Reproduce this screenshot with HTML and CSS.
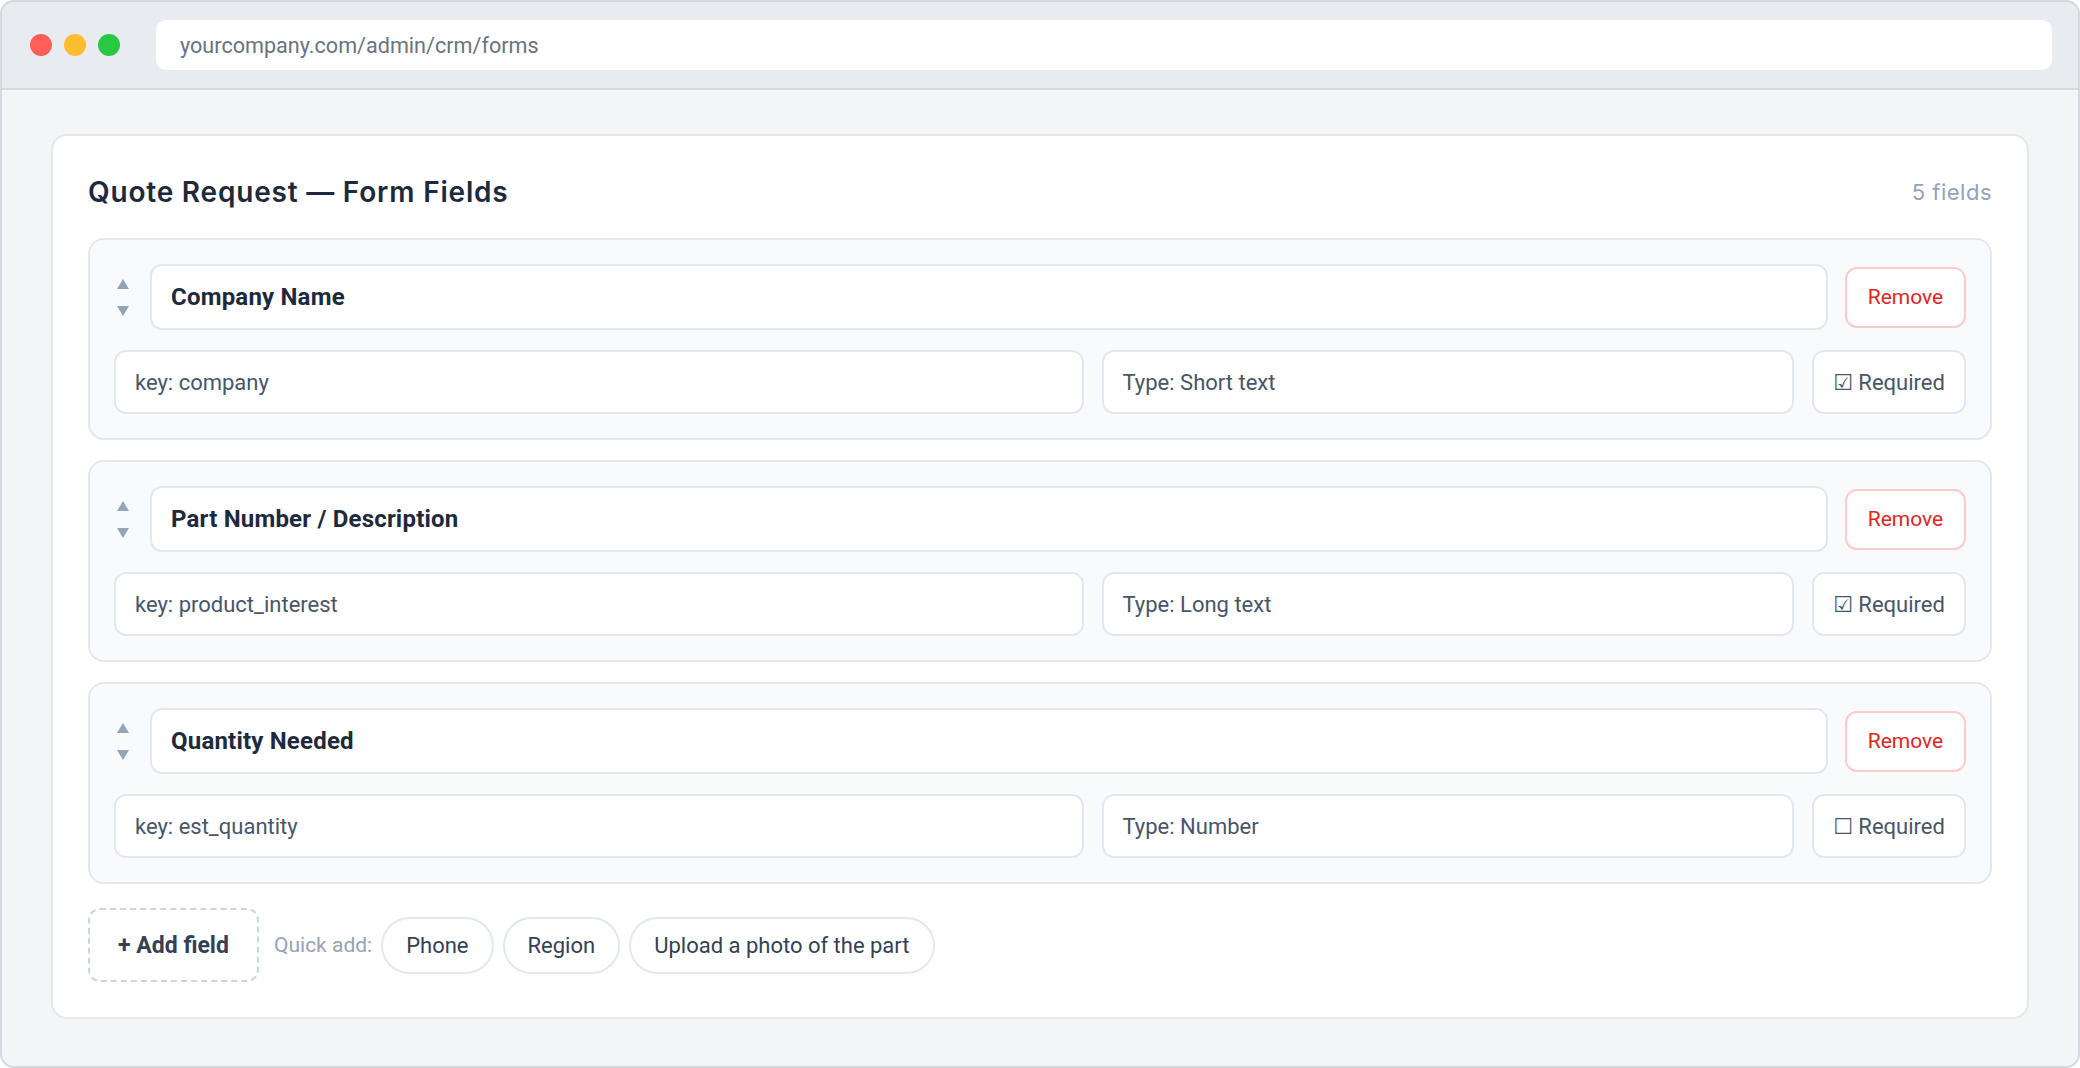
FILE: index.html
```html
<!DOCTYPE html>
<html lang="en">
<head>
  <meta charset="UTF-8">
  <meta name="viewport" content="width=device-width, initial-scale=1.0">
  <title>Quote Request — Form Fields</title>
  <link rel="stylesheet" href="styles.css">
</head>
<body>
  <div class="window">
    <div class="topbar">
      <div class="dots">
        <span class="dot red"></span>
        <span class="dot yellow"></span>
        <span class="dot green"></span>
      </div>
      <div class="url">yourcompany.com/admin/crm/forms</div>
    </div>

    <div class="content">
      <div class="panel">
        <div class="panel-head">
          <h1>Quote Request — Form Fields</h1>
          <span class="count">5 fields</span>
        </div>

        <div class="fields">
          <div class="field">
            <div class="row-top">
              <div class="arrows">
                <svg width="12" height="10" viewBox="0 0 12 10"><path d="M6 0 12 10H0z"/></svg>
                <svg width="12" height="10" viewBox="0 0 12 10"><path d="M0 0h12L6 10z"/></svg>
              </div>
              <div class="input label">Company Name</div>
              <button class="remove">Remove</button>
            </div>
            <div class="row-bottom">
              <div class="input">key: company</div>
              <div class="input">Type: Short text</div>
              <button class="required">☑ Required</button>
            </div>
          </div>

          <div class="field">
            <div class="row-top">
              <div class="arrows">
                <svg width="12" height="10" viewBox="0 0 12 10"><path d="M6 0 12 10H0z"/></svg>
                <svg width="12" height="10" viewBox="0 0 12 10"><path d="M0 0h12L6 10z"/></svg>
              </div>
              <div class="input label">Part Number / Description</div>
              <button class="remove">Remove</button>
            </div>
            <div class="row-bottom">
              <div class="input">key: product_interest</div>
              <div class="input">Type: Long text</div>
              <button class="required">☑ Required</button>
            </div>
          </div>

          <div class="field">
            <div class="row-top">
              <div class="arrows">
                <svg width="12" height="10" viewBox="0 0 12 10"><path d="M6 0 12 10H0z"/></svg>
                <svg width="12" height="10" viewBox="0 0 12 10"><path d="M0 0h12L6 10z"/></svg>
              </div>
              <div class="input label">Quantity Needed</div>
              <button class="remove">Remove</button>
            </div>
            <div class="row-bottom">
              <div class="input">key: est_quantity</div>
              <div class="input">Type: Number</div>
              <button class="required">☐ Required</button>
            </div>
          </div>
        </div>

        <div class="add-row">
          <button class="add-field">+ Add field</button>
          <span class="quick">Quick add:</span>
          <button class="pill">Phone</button>
          <button class="pill">Region</button>
          <button class="pill">Upload a photo of the part</button>
        </div>
      </div>
    </div>
  </div>
</body>
</html>
```

FILE: styles.css
```css
* {
  box-sizing: border-box;
}
html, body {
  overflow: hidden;
}
body {
  margin: 0;
  background: #fff;
  font-family: Roboto, "DejaVu Sans", sans-serif;
  color: #475569;
}
button {
  font-family: inherit;
  background: #fff;
  cursor: pointer;
}
.window {
  height: 100vh;
  border: 2px solid #d5d9df;
  border-radius: 14px;
  overflow: hidden;
  background: #f4f5f7;
  display: flex;
  flex-direction: column;
}
.topbar {
  height: 88px;
  flex: none;
  background: #e8ebef;
  border-bottom: 2px solid #d5d9df;
  display: flex;
  align-items: center;
  padding: 0 26px 0 28px;
}
.dots {
  display: flex;
  gap: 12px;
}
.dot {
  width: 22px;
  height: 22px;
  border-radius: 50%;
}
.red { background: #ff5f57; }
.yellow { background: #febc2e; }
.green { background: #28c840; }
.url {
  flex: 1;
  margin-left: 36px;
  height: 50px;
  background: #fff;
  border-radius: 10px;
  display: flex;
  align-items: center;
  padding-left: 24px;
  font-size: 21.6px;
  color: #6b7280;
}
.content {
  flex: 1;
  padding: 44px 49px;
}
.panel {
  background: #fff;
  border: 2px solid #e5e7eb;
  border-radius: 16px;
  padding: 35px;
}
.panel-head {
  height: 41px;
  margin-bottom: 26px;
  display: flex;
  align-items: center;
  justify-content: space-between;
}
.panel-head h1 {
  margin: 0;
  font-family: Inter, sans-serif;
  font-size: 28px;
  font-weight: 600;
  letter-spacing: 0.8px;
  color: #1e293b;
}
.count {
  font-family: Inter, sans-serif;
  font-size: 22px;
  letter-spacing: 0.5px;
  color: #94a3b8;
}
.fields {
  display: flex;
  flex-direction: column;
  gap: 20px;
}
.field {
  height: 202px;
  background: #f8fafc;
  border: 2px solid #e2e8f0;
  border-radius: 16px;
  padding: 24px;
  display: flex;
  flex-direction: column;
  gap: 20px;
}
.row-top {
  height: 66px;
  display: flex;
  align-items: center;
  gap: 17px;
}
.arrows {
  width: 18px;
  margin-right: 1px;
  display: flex;
  flex-direction: column;
  align-items: center;
  gap: 17px;
  fill: #94a3b8;
}
.arrows svg {
  display: block;
}
.input {
  height: 100%;
  background: #fff;
  border: 2px solid #e2e8f0;
  border-radius: 12px;
  display: flex;
  align-items: center;
  padding-left: 19px;
  font-size: 22px;
  color: #475569;
  white-space: nowrap;
  overflow: hidden;
}
.input.label {
  flex: 1;
  font-size: 24px;
  font-weight: 700;
  letter-spacing: 0.2px;
  color: #1e293b;
}
.remove {
  width: 121px;
  height: 61px;
  border: 2px solid #fecaca;
  border-radius: 12px;
  font-size: 21px;
  color: #dc2626;
}
.row-bottom {
  height: 64px;
  display: grid;
  grid-template-columns: 7fr 5fr 154px;
  gap: 18px;
}
.required {
  border: 2px solid #e2e8f0;
  border-radius: 12px;
  font-size: 22px;
  color: #475569;
}
.add-row {
  margin-top: 24px;
  height: 74px;
  display: flex;
  align-items: center;
  gap: 9px;
}
.add-field {
  width: 171px;
  height: 74px;
  border: 2px dashed #cbd5e1;
  border-radius: 12px;
  font-size: 23px;
  font-weight: 700;
  color: #334155;
}
.quick {
  margin-left: 6px;
  font-size: 21px;
  color: #94a3b8;
}
.pill {
  height: 57px;
  padding: 0 23px;
  border: 2px solid #e2e8f0;
  border-radius: 999px;
  font-size: 22px;
  color: #334155;
}
```
